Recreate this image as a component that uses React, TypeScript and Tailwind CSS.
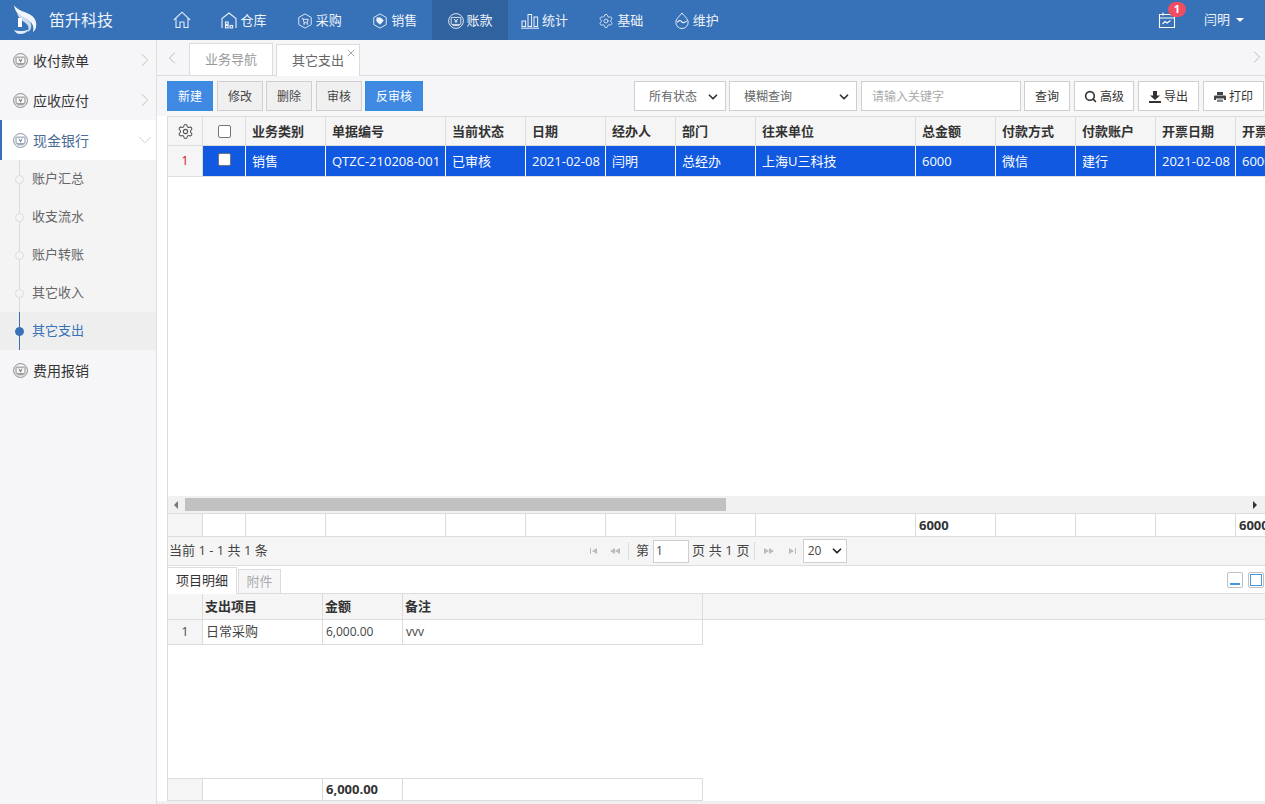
import React from "react";
import { ChevronLeft, ChevronRight, ChevronDown, Settings, X, Search } from "lucide-react";

const font = "font-['Open_Sans','Noto_Sans_CJK_SC',sans-serif]";

// the round icon used by the account menu and the sidebar groups
const RoundIcon = ({ className = "" }: { className?: string }) => (
  <svg viewBox="0 0 16 16" className={className} fill="none" stroke="currentColor" strokeWidth="0.9">
    <circle cx="8" cy="8" r="7.4" />
    <rect x="3.2" y="4.4" width="9.6" height="7" rx="0.6" />
    <path d="M4.6 12.6h6.8M6 6l2 1.8L10 6M8 7.8v2.2M6.4 8.2h3.2" />
  </svg>
);

const HomeIcon = () => (
  <svg viewBox="0 0 18 18" className="w-[18px] h-[18px] text-[#e6eef8]" fill="none" stroke="currentColor" strokeWidth="1.1">
    <path d="M0.8 9L9 1.2 17.200 9" />
    <path d="M3 7.500V16.500h4V11h4v5.500h4V7.500" />
  </svg>
);

const WarehouseIcon = () => (
  <svg viewBox="0 0 16 17" className="w-[16px] h-[17px]" fill="none" stroke="currentColor" strokeWidth="1.1">
    <path d="M1 16V6.500L8 1l7 5.500V16" />
    <rect x="4.500" y="10" width="2.600" height="2.400" />
    <rect x="4.500" y="13.500" width="2.600" height="2.400" />
    <rect x="9" y="13.500" width="2.600" height="2.400" />
  </svg>
);

const CartHexIcon = () => (
  <svg viewBox="0 0 18 18" className="w-4 h-4" fill="none" stroke="currentColor" strokeWidth="1">
    <path d="M9 1l7 4v8l-7 4-7-4V5z" />
    <path d="M5.500 6h1.200l1 4.500h4l.9-3.400H7" />
    <circle cx="8" cy="12.200" r="0.600" />
    <circle cx="11.600" cy="12.200" r="0.600" />
  </svg>
);

const TagHexIcon = () => (
  <svg viewBox="0 0 18 18" className="w-4 h-4" fill="none" stroke="currentColor" strokeWidth="1">
    <path d="M9 1l7 4v8l-7 4-7-4V5z" />
    <path d="M5.500 5.500h4.200l3 3-3.600 4.200-3.600-3.200z" fill="currentColor" />
  </svg>
);

const BarsIcon = () => (
  <svg viewBox="0 0 18 16" className="w-[18px] h-4" fill="none" stroke="currentColor" strokeWidth="1">
    <rect x="1" y="8" width="3.600" height="5.500" />
    <rect x="7" y="1.500" width="3.600" height="12" />
    <rect x="13" y="4" width="3.600" height="9.500" />
    <path d="M0 15.200h18" />
  </svg>
);

const DropIcon = () => (
  <svg viewBox="0 0 16 18" className="w-4 h-[17px]" fill="none" stroke="currentColor" strokeWidth="1">
    <path d="M8 1c2 3 6.500 6 6.500 10A6.500 6.500 0 0 1 1.500 11C1.500 7 6 4 8 1z" />
    <path d="M3 11c1.500-2.500 3-2.500 4.500-.8s3 1.500 5.500-.8" strokeWidth="1.300" />
  </svg>
);

const CalendarIcon = () => (
  <svg viewBox="0 0 18 18" className="w-[18px] h-[18px]" fill="none" stroke="currentColor" strokeWidth="1.100">
    <path d="M1.500 3.500h15v13h-15z" />
    <path d="M1.500 7h15M5 1.500v3M13 1.500v3" />
    <path d="M4.500 13l2.500-2.500 2 1.500 3.500-2.500" />
  </svg>
);

const Logo = () => (
  <svg viewBox="0 0 24 30" className="w-[24px] h-[30px]" fill="none">
    <path d="M1 0c3 5 9 6 15 9 6 3 8 8 7 13-.5 2.500-1.500 4-3 5 1-5 0-9-5-12C9 12 2 9 1 0z" fill="#f2f6fb" />
    <path d="M4 8c3 2.500 7 4 10 6 4 2.500 5 6 4 9-.5 2-2 3.500-3 4 1-3 1-6-2-8.500C10 16 5 13 4 8z" fill="#c9dbef" />
    <path d="M5 13h4v9H5z" fill="#ffffff" />
    <path d="M1 25c5 2 12 1 16-1-3 3-6 5-10 5-3 0-5-2-6-4z" fill="#e4edf7" />
  </svg>
);

const navItems = [
  { label: "仓库", icon: <WarehouseIcon /> },
  { label: "采购", icon: <CartHexIcon /> },
  { label: "销售", icon: <TagHexIcon /> },
  { label: "账款", icon: <RoundIcon className="w-[16px] h-[16px]" />, active: true },
  { label: "统计", icon: <BarsIcon /> },
  { label: "基础", icon: <Settings className="w-4 h-4" strokeWidth={1.200} /> },
  { label: "维护", icon: <DropIcon /> },
];

const Header = () => (
  <div className="h-10 shrink-0 bg-[#3771b7] flex items-center text-white">
    <div className="w-[173px] shrink-0 flex items-center pl-[13px] gap-[12px]">
      <Logo />
      <span className="text-[16px] text-[#eef3fa]">笛升科技</span>
    </div>
    <HomeIcon />
    <div className="flex h-full ml-[15px] text-[13px] text-[#eef3fa]">
      {navItems.map((n) => (
        <div key={n.label} className={`w-[75.4px] flex items-center justify-end gap-[3px] pr-[15px] pt-px h-full ${n.active ? "bg-[#2f629f]" : ""}`}>
          {n.icon}
          <span>{n.label}</span>
        </div>
      ))}
    </div>
    <div className="ml-auto flex items-center h-full">
      <div className="relative mr-[28px]">
        <CalendarIcon />
        <span className="absolute -top-[9px] left-[10px] w-[18px] h-[15px] rounded-full bg-[#ee4d62] text-[11px] font-bold flex items-center justify-center">1</span>
      </div>
      <span className="text-[13px] text-[#eef3fa]">闫明</span>
      <span className="ml-[6px] mr-[21px] w-0 h-0 border-x-[4px] border-x-transparent border-t-[4px] border-t-white" />
    </div>
  </div>
);

const SideGroup = ({ label, open, current, plain }: { label: string; open?: boolean; current?: boolean; plain?: boolean }) => (
  <div className={`h-10 flex items-center ${current ? "bg-white border-l-2 border-[#3771b7] pl-[11px]" : "pl-[13px]"}`}>
    <RoundIcon className={`w-[15px] h-[15px] ${current ? "text-[#6f7f96]" : "text-[#777]"}`} />
    <span className={`ml-[5px] text-[14px] ${current ? "text-[#4a6b96]" : "text-[#333]"}`}>{label}</span>
    {open && <ChevronDown className="ml-auto mr-0 w-[22px] h-[22px] text-[#c8c8c8]" strokeWidth={1} />}
    {!open && !plain && <ChevronRight className="ml-auto mr-0 w-[22px] h-[22px] text-[#c9b8b0]" strokeWidth={1} />}
  </div>
);

const SubItem = ({ label, active }: { label: string; active?: boolean }) => (
  <div className={`h-[38px] relative flex items-center pl-[32px] text-[13px] ${active ? "bg-[#eeeeee] text-[#3771b7]" : "text-[#666]"}`}>
    <span className={`absolute left-[19px] top-0 bottom-0 w-px ${active ? "bg-[#3771b7]" : "bg-[#dcdcdc]"}`} />
    <span className={`absolute left-[15px] top-[15px] w-[9px] h-[9px] rounded-full border ${active ? "bg-[#3771b7] border-[#3771b7]" : "bg-[#f4f4f5] border-[#dcdcdc]"}`} />
    {label}
  </div>
);

const Sidebar = () => (
  <div className="w-[157px] shrink-0 bg-[#f6f6f8] border-r border-[#e1e1e1]">
    <SideGroup label="收付款单" />
    <SideGroup label="应收应付" />
    <SideGroup label="现金银行" open current />
    <div className="bg-[#f4f4f5]">
      <SubItem label="账户汇总" />
      <SubItem label="收支流水" />
      <SubItem label="账户转账" />
      <SubItem label="其它收入" />
      <SubItem label="其它支出" active />
    </div>
    <SideGroup label="费用报销" plain />
  </div>
);

const TabBar = () => (
  <div className="h-[36px] shrink-0 flex items-end border-b border-[#dcdcdc] bg-[#f6f6f8] relative">
    <ChevronLeft className="absolute left-[5px] top-[8px] w-[20px] h-[20px] text-[#bbb]" strokeWidth={1.200} />
    <div className="ml-[32px] w-[84px] h-[32px] border border-[#dcdcdc] border-b-0 bg-white text-[13px] text-[#999] flex items-center justify-center">业务导航</div>
    <div className="relative ml-[3px] w-[84px] h-[32px] border border-[#dcdcdc] border-b-0 bg-white text-[13px] text-[#666] flex items-center justify-center -mb-px">
      其它支出
      <X className="absolute right-[2px] top-[2px] w-[12px] h-[12px] text-[#aaa]" strokeWidth={2} />
    </div>
    <ChevronRight className="absolute right-[-2px] top-[7px] w-[20px] h-[20px] text-[#bbb]" strokeWidth={1.200} />
  </div>
);

const GrayBtn = ({ children }: { children: React.ReactNode }) => (
  <button className="h-[30px] w-[46px] border border-[#cfcfcf] bg-[#f0f0f0] text-[12px] text-[#444] pt-px">{children}</button>
);

const WhiteBtn = ({ w, children }: { w: string; children: React.ReactNode }) => (
  <button className={`h-[30px] ${w} border border-[#cfcfcf] bg-white text-[12px] text-[#333] flex items-center justify-center gap-[3px] pt-px`}>{children}</button>
);

const FakeSelect = ({ w, label }: { w: string; label: string }) => (
  <div className={`h-[30px] ${w} border border-[#cfcfcf] bg-white text-[12px] text-[#666] flex items-center pl-[14px] pr-[5px] justify-between pt-px`}>
    {label}
    <ChevronDown className="w-[14px] h-[14px] text-[#333]" strokeWidth={3} />
  </div>
);

const SaveIcon = () => (
  <svg viewBox="0 0 12 12" className="w-[12px] h-[12px] text-[#333]" fill="currentColor">
    <path d="M4 0h4v4.500h3L6 9 1 4.500h3z" />
    <path d="M0 10h12v2H0z" />
  </svg>
);

const PrintIcon = () => (
  <svg viewBox="0 0 12 12" className="w-[12px] h-[12px] text-[#444]" fill="currentColor">
    <path d="M3 1h6v3H3z" />
    <path d="M1 4.500h10a1 1 0 0 1 1 1V9h-2V7.500H2V9H0V5.500a1 1 0 0 1 1-1z" />
    <path d="M3 8.500h6V11H3z" opacity="0.650" />
  </svg>
);

const Toolbar = () => (
  <div className="h-10 shrink-0 flex items-center pl-[10px] pr-[1px] bg-[#f6f6f8]">
    <button className="h-[30px] w-[46px] bg-[#3f89e3] border border-[#2f8fdc] text-white text-[12px] pt-px">新建</button>
    <div className="w-[4px]" />
    <GrayBtn>修改</GrayBtn>
    <div className="w-[3px]" />
    <GrayBtn>删除</GrayBtn>
    <div className="w-[4px]" />
    <GrayBtn>审核</GrayBtn>
    <div className="w-[3px]" />
    <button className="h-[30px] w-[58px] bg-[#3f89e3] border border-[#2f8fdc] text-white text-[12px] pt-px">反审核</button>
    <div className="ml-auto flex items-center">
      <FakeSelect w="w-[92px]" label="所有状态" />
      <div className="w-[3px]" />
      <FakeSelect w="w-[128px]" label="模糊查询" />
      <div className="w-[4px]" />
      <div className="h-[30px] w-[160px] border border-[#cfcfcf] bg-white text-[12px] text-[#aaa] flex items-center pl-[10px] pt-px">请输入关键字</div>
      <div className="w-[3px]" />
      <WhiteBtn w="w-[46px]">查询</WhiteBtn>
      <div className="w-[4px]" />
      <WhiteBtn w="w-[60px]"><Search className="w-[13px] h-[13px]" strokeWidth={3} />高级</WhiteBtn>
      <div className="w-[4px]" />
      <WhiteBtn w="w-[61px]"><SaveIcon />导出</WhiteBtn>
      <div className="w-[4px]" />
      <WhiteBtn w="w-[61px]"><PrintIcon />打印</WhiteBtn>
    </div>
  </div>
);

const columns = [
  { w: "w-[80px]", head: "业务类别", val: "销售" },
  { w: "w-[120px]", head: "单据编号", val: "QTZC-210208-001" },
  { w: "w-[80px]", head: "当前状态", val: "已审核" },
  { w: "w-[80px]", head: "日期", val: "2021-02-08" },
  { w: "w-[70px]", head: "经办人", val: "闫明" },
  { w: "w-[80px]", head: "部门", val: "总经办" },
  { w: "w-[160px]", head: "往来单位", val: "上海U三科技" },
  { w: "w-[80px]", head: "总金额", val: "6000", sum: "6000" },
  { w: "w-[80px]", head: "付款方式", val: "微信" },
  { w: "w-[80px]", head: "付款账户", val: "建行" },
  { w: "w-[80px]", head: "开票日期", val: "2021-02-08" },
  { w: "w-[80px]", head: "开票金额", val: "6000", sum: "6000" },
];

const CheckBox = ({ up }: { up?: boolean }) => (
  <span className={`block w-[13px] h-[13px] rounded-[2px] border border-[#767676] bg-white ${up ? "-mt-[4px]" : ""}`} />
);

const MainGrid = () => (
  <div className="flex-1 min-h-0 flex flex-col bg-white border-l border-[#dcdcdc] ml-[10px] overflow-hidden">
    <div className="h-[30px] shrink-0 flex bg-[#f5f5f5] border-y border-[#dcdcdc]">
      <div className="w-[35px] shrink-0 border-r border-[#dcdcdc] flex items-center justify-center">
        <Settings className="w-[17px] h-[17px] text-[#555]" strokeWidth={1.500} />
      </div>
      <div className="w-[43px] shrink-0 border-r border-[#dcdcdc] flex items-center justify-center"><CheckBox /></div>
      {columns.map((c) => (
        <div key={c.head} className={`${c.w} shrink-0 border-r border-[#dcdcdc] pl-[6px] pt-px flex items-center text-[13px] font-bold text-[#333] whitespace-nowrap overflow-hidden`}>{c.head}</div>
      ))}
    </div>
    <div className="h-[31px] shrink-0 flex border-b border-[#e0e0e0]">
      <div className="w-[35px] shrink-0 bg-[#f5f5f5] border-r border-[#dcdcdc] flex items-center justify-center text-[12px] text-[#d0021b]">1</div>
      <div className="w-[43px] shrink-0 bg-[#1059e0] border-r border-white flex items-center justify-center"><CheckBox up /></div>
      {columns.map((c) => (
        <div key={c.head} className={`${c.w} shrink-0 bg-[#1059e0] border-r border-white pl-[6px] pt-px flex items-center text-[13px] text-white whitespace-nowrap overflow-hidden`}>{c.val}</div>
      ))}
    </div>
    <div className="flex-1 min-h-0" />
    {/* horizontal scrollbar */}
    <div className="h-[17px] shrink-0 bg-[#f1f1f1] flex items-center relative">
      <span className="absolute left-[6px] top-[5px] w-0 h-0 border-y-[4px] border-y-transparent border-r-[4px] border-r-[#777]" />
      <span className="ml-[17px] w-[541px] h-[13px] bg-[#c1c1c1]" />
      <span className="absolute right-[8px] top-[5px] w-0 h-0 border-y-[4px] border-y-transparent border-l-[4px] border-l-[#333]" />
    </div>
    <div className="h-[24px] shrink-0 flex border-y border-[#dcdcdc]">
      <div className="w-[35px] shrink-0 bg-[#f5f5f5] border-r border-[#dcdcdc]" />
      <div className="w-[43px] shrink-0 border-r border-[#dcdcdc]" />
      {columns.map((c) => (
        <div key={c.head} className={`${c.w} shrink-0 border-r border-[#dcdcdc] pl-[3px] pt-px flex items-center text-[13px] font-bold text-[#333] overflow-hidden`}>{c.sum}</div>
      ))}
    </div>
  </div>
);

const PagerGlyph = ({ d }: { d: string }) => (
  <svg viewBox="0 0 10 8" className="w-[10px] h-[8px] text-[#bbb]" fill="currentColor"><path d={d} /></svg>
);

const Pager = () => (
  <div className="h-[29px] shrink-0 ml-[10px] border-l border-b border-[#dcdcdc] bg-[#f5f5f5] flex items-center text-[13px] text-[#444] relative">
    <span className="ml-[1px]">当前 1 - 1 共 1 条</span>
    <div className="absolute left-[421px] top-0 h-full flex items-center">
      <PagerGlyph d="M1 1h1v6H1zM8 1v6L3 4z" />
      <span className="w-[11px]" />
      <PagerGlyph d="M0 4l5-3v6zM5 4l5-3v6z" />
      <span className="ml-[8px] mr-[5px] w-px h-[18px] bg-[#dedede]" />
      <span className="ml-[2px]">第</span>
      <div className="ml-[4px] mr-[3px] w-[36px] h-[23px] border border-[#cfcfcf] bg-white flex items-center pl-[2px] text-[12px]">1</div>
      <span className="whitespace-nowrap tracking-[0.15px]">页 共 1 页</span>
      <span className="ml-[4px] mr-[9px] w-px h-[18px] bg-[#dedede]" />
      <PagerGlyph d="M0 1l5 3-5 3zM5 1l5 3-5 3z" />
      <span className="w-[13px]" />
      <PagerGlyph d="M2 1v6l5-3zM8 1h1v6H8z" />
      <div className="ml-[6px] w-[44px] h-[24px] border border-[#cfcfcf] bg-white flex items-center justify-between pl-[4px] pr-[2px] text-[12px]">
        20
        <ChevronDown className="w-[14px] h-[14px] text-[#222]" strokeWidth={3} />
      </div>
    </div>
  </div>
);

const DetailTabs = () => (
  <div className="h-[27px] shrink-0 ml-[10px] border-l border-[#dcdcdc] bg-white flex items-end relative">
    <div className="w-[69px] h-[27px] border-r border-t border-[#dcdcdc] text-[13px] text-[#333] flex items-center justify-center -mb-px bg-white z-10 self-start mt-px">项目明细</div>
    <div className="ml-px w-[43px] h-[24px] border border-b-0 border-[#dcdcdc] bg-[#f6f6f8] text-[13px] text-[#aaa] flex items-center justify-center">附件</div>
    <span className="absolute right-[22px] top-[6px] w-[16px] h-[16px] rounded-[2px] border border-[#c0c0c0] flex items-end justify-center pb-[2px]">
      <span className="w-[10px] h-[2px] bg-[#3f9ae3]" />
    </span>
    <span className="absolute right-[1px] top-[6px] w-[16px] h-[16px] rounded-[2px] border border-[#c0c0c0] p-[1px]">
      <span className="block w-full h-full border border-[#3f9ae3]" />
    </span>
  </div>
);

const detailColumns = [
  { w: "w-[120px]", head: "支出项目", val: "日常采购", size: "text-[13px]" },
  { w: "w-[80px]", head: "金额", val: "6,000.00", sum: "6,000.00", size: "text-[12px]" },
  { w: "w-[300px]", head: "备注", val: "vvv", size: "text-[12px]" },
];

const DetailGrid = () => (
  <div className="h-[208px] shrink-0 ml-[10px] border-l border-[#dcdcdc] bg-white flex flex-col">
    <div className="h-[27px] shrink-0 flex bg-[#f5f5f5] border-y border-[#dcdcdc]">
      <div className="w-[35px] shrink-0 border-r border-[#dcdcdc]" />
      {detailColumns.map((c) => (
        <div key={c.head} className={`${c.w} shrink-0 border-r border-[#dcdcdc] pl-[2px] flex items-center text-[13px] font-bold text-[#333]`}>{c.head}</div>
      ))}
    </div>
    <div className="h-[25px] shrink-0 flex w-[535px] border-b border-[#dcdcdc]">
      <div className="w-[35px] shrink-0 bg-[#f5f5f5] border-r border-[#dcdcdc] flex items-center justify-center text-[12px] text-[#444]">1</div>
      {detailColumns.map((c) => (
        <div key={c.head} className={`${c.w} shrink-0 border-r border-[#dcdcdc] pl-[3px] flex items-center ${c.size} text-[#444]`}>{c.val}</div>
      ))}
    </div>
    <div className="flex-1 min-h-0" />
    <div className="h-[23px] shrink-0 flex w-[535px] border-y border-[#dcdcdc]">
      <div className="w-[35px] shrink-0 bg-[#f5f5f5] border-r border-[#dcdcdc]" />
      {detailColumns.map((c) => (
        <div key={c.head} className={`${c.w} shrink-0 border-r border-[#dcdcdc] pl-[3px] flex items-center text-[13px] font-bold text-[#333]`}>{c.sum}</div>
      ))}
    </div>
  </div>
);

export default function App() {
  return (
    <div className={`${font} w-[1265px] h-[804px] overflow-hidden flex flex-col bg-white`}>
      <Header />
      <div className="flex-1 min-h-0 flex">
        <Sidebar />
        <div className="flex-1 min-w-0 flex flex-col bg-white overflow-hidden">
          <TabBar />
          <Toolbar />
          <MainGrid />
          <Pager />
          <DetailTabs />
          <DetailGrid />
          <div className="h-[3px] shrink-0 bg-[#f0f0f0]" />
        </div>
      </div>
    </div>
  );
}
